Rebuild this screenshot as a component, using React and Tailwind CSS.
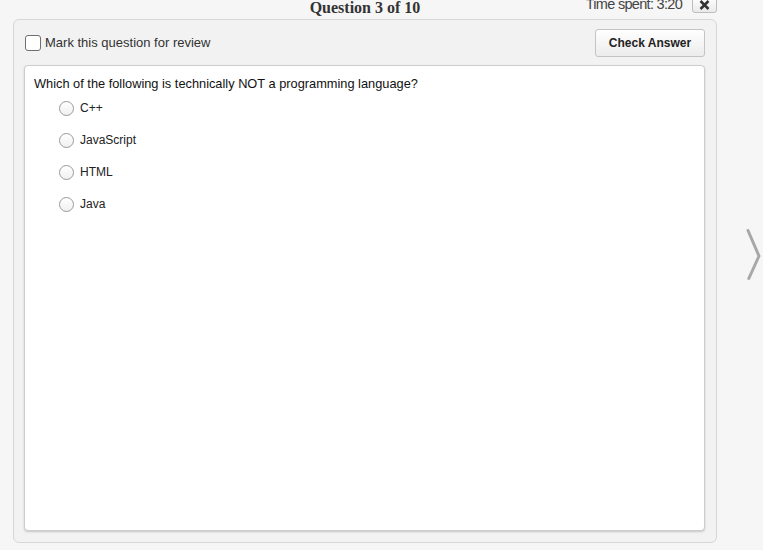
import React from "react";

const options = ["C++", "JavaScript", "HTML", "Java"];

export default function App() {
  return (
    <div className="w-[763px] h-[550px] overflow-hidden bg-[#f6f6f6] font-['Liberation_Sans',Arial,sans-serif] text-[#333]">
      <div className="ml-[13px] w-[704px] h-[19px] grid grid-cols-[1fr_auto_1fr]">
        <div />
        <div className="font-['Liberation_Serif','Times_New_Roman',serif] font-bold text-[16px] leading-[16px] text-[#333]">
          Question 3 of 10
        </div>
        <div className="flex justify-end items-start gap-[10px]">
          <span className="text-[14.5px] leading-[15px] tracking-[-0.7px] text-[#444] -mt-[3px] whitespace-nowrap">
            Time spent: 3:20
          </span>
          <div className="w-[25px] h-[17px] -mt-[4px] border border-[#bdbdbd] rounded-b-[3px] bg-gradient-to-b from-white to-[#eaeaea] flex items-center justify-center">
            <svg width="11" height="10" viewBox="0 0 11 10" className="mt-[1px]">
              <path d="M1.5 1 L9.5 9 M9.5 1 L1.5 9" stroke="#333" strokeWidth="2.6" strokeLinecap="butt" />
            </svg>
          </div>
        </div>
      </div>
      <div className="flex">
        <div className="ml-[13px] w-[704px] h-[524px] border border-[#d6d6d6] rounded-[6px] bg-[#f2f2f2] flex flex-col pl-[10px] pr-[11px] pt-[9px] pb-[11px]">
          <div className="flex items-center justify-between h-[28px]">
            <label className="flex items-center gap-[4px] pl-[1px]">
              <span className="w-[16px] h-[16px] border border-[#6f6f6f] rounded-[3px] bg-white" />
              <span className="text-[13px] leading-[16px] text-[#333]">Mark this question for review</span>
            </label>
            <button className="w-[110px] h-[28px] border border-[#c4c4c4] rounded-[3px] bg-gradient-to-b from-white to-[#ececec] text-[12px] font-bold text-[#222]">
              Check Answer
            </button>
          </div>
          <div className="mt-[8px] flex-1 border border-[#cdcdcd] rounded-[4px] bg-white shadow-[0_1px_2px_rgba(0,0,0,0.18)] pl-[9px] pt-[10px]">
            <div className="text-[12.8px] leading-[16px] text-[#111]">
              Which of the following is technically NOT a programming language?
            </div>
            <div className="flex flex-col pl-[25px]">
              {options.map((o) => (
                <div key={o} className="h-[32px] flex items-center gap-[6px]">
                  <span className="w-[15px] h-[15px] rounded-full border border-[#9a9a9a] bg-gradient-to-b from-white to-[#f0f0f0]" />
                  <span className="text-[12px] leading-[14px] text-[#222]">{o}</span>
                </div>
              ))}
            </div>
          </div>
        </div>
        <div className="flex-1 pl-[29px] pt-[210px]">
          <svg width="16" height="52" viewBox="0 0 16 52">
            <path d="M2 1.5 L13 27 L2.8 49.5" stroke="#a8a8a8" strokeWidth="3" fill="none" strokeLinecap="round" strokeLinejoin="round" />
          </svg>
        </div>
      </div>
    </div>
  );
}
